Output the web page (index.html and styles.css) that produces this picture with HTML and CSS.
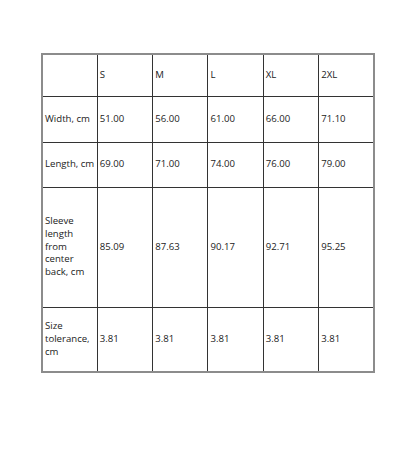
FILE: index.html
```html
<!DOCTYPE html>
<html>
<head>
<meta charset="utf-8">
<link rel="stylesheet" href="styles.css">
</head>
<body>
<table class="size-table">
  <colgroup>
    <col class="c"><col class="c"><col class="c"><col class="c"><col class="c"><col class="c">
  </colgroup>
  <tr class="r1"><td></td><td>S</td><td>M</td><td>L</td><td>XL</td><td>2XL</td></tr>
  <tr class="r2"><td>Width, cm</td><td>51.00</td><td>56.00</td><td>61.00</td><td>66.00</td><td>71.10</td></tr>
  <tr class="r3"><td>Length, cm</td><td>69.00</td><td>71.00</td><td>74.00</td><td>76.00</td><td>79.00</td></tr>
  <tr class="r4"><td>Sleeve length from center back, cm</td><td>85.09</td><td>87.63</td><td>90.17</td><td>92.71</td><td>95.25</td></tr>
  <tr class="r5"><td>Size tolerance, cm</td><td>3.81</td><td>3.81</td><td>3.81</td><td>3.81</td><td>3.81</td></tr>
</table>
</body>
</html>
```
FILE: styles.css
```css
html, body {
  margin: 0;
  padding: 0;
  background: #ffffff;
}
body {
  padding: 53px 0 0 41px;
  font-family: "Open Sans", Lato, sans-serif;
  font-size: 9.6px;
  color: #222222;
}
.size-table {
  border-collapse: collapse;
  table-layout: fixed;
  width: 334px;
  border: 2px solid #8c8c8c;
}
.size-table .c {
  width: 55.33px;
}
.size-table td {
  border: 1px solid #333333;
  padding: 0 0 0 2px;
  vertical-align: middle;
  line-height: 12.7px;
  text-align: left;
}
.r1 { height: 42px; }
.r2 { height: 46px; }
.r3 { height: 45px; }
.r4 { height: 120px; }
.r5 { height: 65px; }
```
